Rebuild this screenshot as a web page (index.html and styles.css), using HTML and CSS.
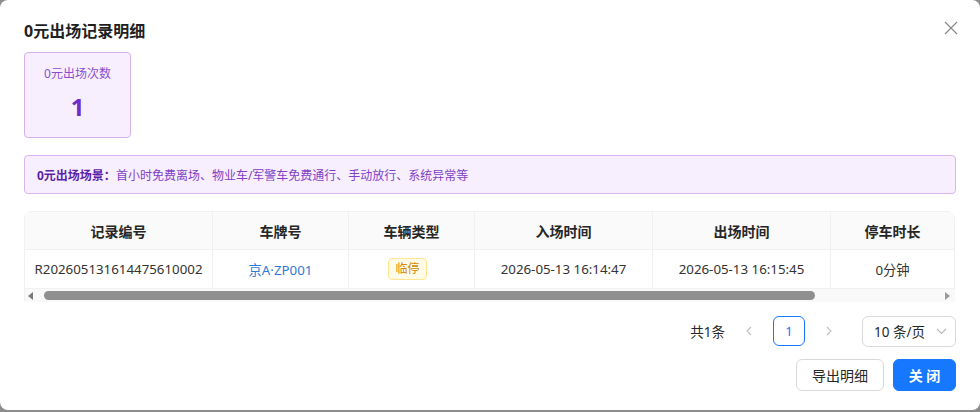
FILE: index.html
```html
<!DOCTYPE html>
<html lang="zh-CN">
<head>
<meta charset="utf-8">
<title>0元出场记录明细</title>
<link rel="stylesheet" href="styles.css">
</head>
<body>
<div class="modal">
  <div class="modal-title">0元出场记录明细</div>
  <button class="close" aria-label="关闭">
    <svg width="14" height="14" viewBox="0 0 14 14"><path d="M1 1L13 13M13 1L1 13" stroke="#8c8c8c" stroke-width="1.3" fill="none"/></svg>
  </button>

  <div class="stat-card">
    <div class="stat-label">0元出场次数</div>
    <div class="stat-value">1</div>
  </div>

  <div class="info-bar"><b>0元出场场景：</b>首小时免费离场、物业车/军警车免费通行、手动放行、系统异常等</div>

  <div class="table-wrap">
    <div class="table-scroll">
      <table class="tbl">
        <colgroup>
          <col class="c1"><col class="c2"><col class="c3"><col class="c4"><col class="c5"><col class="c6"><col class="c7">
        </colgroup>
        <thead>
          <tr><th>记录编号</th><th>车牌号</th><th>车辆类型</th><th>入场时间</th><th>出场时间</th><th>停车时长</th><th></th></tr>
        </thead>
        <tbody>
          <tr>
            <td>R202605131614475610002</td>
            <td><span class="plate">京A·ZP001</span></td>
            <td><span class="tag">临停</span></td>
            <td>2026-05-13 16:14:47</td>
            <td>2026-05-13 16:15:45</td>
            <td>0分钟</td>
            <td></td>
          </tr>
        </tbody>
      </table>
    </div>
    <div class="hscroll">
      <span class="arrow left"></span>
      <div class="track"><div class="thumb"></div></div>
      <span class="arrow right"></span>
    </div>
  </div>

  <div class="pager">
    <span class="total">共1条</span>
    <span class="pg-nav">
      <svg width="8" height="10" viewBox="0 0 8 10"><path d="M6 1L2 5L6 9" stroke="#c0c0c0" stroke-width="1.1" fill="none"/></svg>
    </span>
    <span class="pg-item">1</span>
    <span class="pg-nav">
      <svg width="8" height="10" viewBox="0 0 8 10"><path d="M2 1L6 5L2 9" stroke="#c0c0c0" stroke-width="1.1" fill="none"/></svg>
    </span>
    <span class="pg-size">10 条/页
      <svg width="11" height="7" viewBox="0 0 11 7"><path d="M1 1L5.5 5.5L10 1" stroke="#b8b8b8" stroke-width="1.1" fill="none"/></svg>
    </span>
  </div>

  <div class="footer">
    <button class="btn">导出明细</button>
    <button class="btn primary">关 闭</button>
  </div>
</div>
</body>
</html>
```

FILE: styles.css
```css
* { box-sizing: border-box; }
html, body {
  margin: 0;
  padding: 0;
  width: 980px;
  height: 412px;
  overflow: hidden;
  background: #8c8c8c;
  font-family: "Noto Sans", "Noto Sans CJK SC", sans-serif;
  color: #262626;
}
.modal {
  position: relative;
  width: 980px;
  height: 410px;
  background: #fff;
  border-radius: 8px;
  padding: 19px 24px 0 24px;
}
.modal-title {
  font-size: 16px;
  font-weight: 700;
  line-height: 24px;
  color: #1f1f1f;
}
.close {
  position: absolute;
  top: 21px;
  right: 22px;
  width: 14px;
  height: 14px;
  padding: 0;
  border: 0;
  background: none;
  display: flex;
}
.stat-card {
  margin-top: 9px;
  width: 107px;
  height: 86px;
  border: 1px solid #d6b1ee;
  background: #f7effe;
  border-radius: 4px;
  padding-top: 11px;
  display: flex;
  flex-direction: column;
  align-items: center;
}
.stat-label {
  font-size: 12px;
  line-height: 20px;
  color: #8a4fcf;
}
.stat-value {
  margin-top: 7px;
  font-size: 24px;
  font-weight: 700;
  line-height: 32px;
  color: #6f2cc9;
}
.info-bar {
  margin-top: 17px;
  height: 39px;
  border: 1px solid #d9b6f2;
  background: #f7effe;
  border-radius: 4px;
  padding: 0 12px;
  display: flex;
  align-items: center;
  font-size: 12px;
  color: #7f3fc8;
}
.info-bar b {
  color: #5b1fa8;
  font-weight: 700;
}
.table-wrap {
  margin-top: 17px;
  width: 931px;
  border-radius: 8px 8px 0 0;
  overflow: hidden;
}
.table-scroll {
  overflow: hidden;
}
.tbl {
  width: 1088px;
  border-collapse: separate;
  border-spacing: 0;
  table-layout: fixed;
  font-size: 13.3px;
}
.c1 { width: 189px; }
.c2 { width: 136px; }
.c3 { width: 126px; }
.c4 { width: 178px; }
.c5 { width: 178px; }
.c6 { width: 124px; }
.c7 { width: 157px; }
.tbl th, .tbl td {
  height: 39px;
  padding: 0 8px;
  text-align: center;
  border-right: 1px solid #f0f0f0;
  border-bottom: 1px solid #f0f0f0;
  white-space: nowrap;
}
.tbl th:first-child, .tbl td:first-child { border-left: 1px solid #f0f0f0; }
.tbl th {
  background: #fafafa;
  font-size: 14px;
  font-weight: 700;
  color: #262626;
  border-top: 1px solid #f0f0f0;
}
.tbl td { color: #333; }
.plate { color: #2f7ad8; }
.tag {
  display: inline-block;
  margin-right: 8px;
  font-size: 12px;
  line-height: 20px;
  padding: 0 6px;
  color: #d48806;
  background: #fffbe6;
  border: 1px solid #ffe58f;
  border-radius: 4px;
}
.hscroll {
  height: 13px;
  display: flex;
  align-items: center;
  background: #f9f9f9;
  border-left: 1px solid #f0f0f0;
}
.arrow {
  width: 0;
  height: 0;
  border-top: 4px solid transparent;
  border-bottom: 4px solid transparent;
}
.arrow.left {
  margin-left: 3px;
  border-right: 5px solid #7a7a7a;
}
.arrow.right {
  margin-right: 5px;
  border-left: 5px solid #9a9a9a;
}
.track {
  flex: 1;
  padding: 0 4px;
  display: flex;
}
.thumb {
  width: 771px;
  height: 9px;
  margin-left: 7px;
  background: #8f8f8f;
  border-radius: 5px;
}
.pager {
  margin-top: 13px;
  height: 32px;
  display: flex;
  align-items: center;
  justify-content: flex-end;
  font-size: 13.5px;
  color: #262626;
}
.total { margin-right: 0; }
.pg-nav {
  width: 32px;
  height: 32px;
  display: flex;
  align-items: center;
  justify-content: center;
  margin: 0 8px 0 8px;
}
.pg-item {
  width: 32px;
  height: 30px;
  border: 1px solid #1677ff;
  border-radius: 6px;
  color: #1677ff;
  display: flex;
  align-items: center;
  justify-content: center;
  font-size: 13px;
}
.pg-size {
  margin-left: 9px;
  width: 94px;
  height: 31px;
  border: 1px solid #d9d9d9;
  border-radius: 6px;
  display: flex;
  align-items: center;
  justify-content: space-between;
  padding: 0 8px 0 11px;
  font-size: 13.5px;
}
.footer {
  margin-top: 12px;
  display: flex;
  justify-content: flex-end;
  gap: 9px;
}
.btn {
  height: 32px;
  padding: 0 15px;
  border: 1px solid #d9d9d9;
  border-radius: 6px;
  background: #fff;
  font-family: "Noto Sans", "Noto Sans CJK SC", sans-serif;
  font-size: 14px;
  color: #262626;
  white-space: nowrap;
}
.btn.primary {
  width: 63px;
  padding: 0;
  background: #1677ff;
  border-color: #1677ff;
  color: #fff;
  font-weight: 700;
}
```
